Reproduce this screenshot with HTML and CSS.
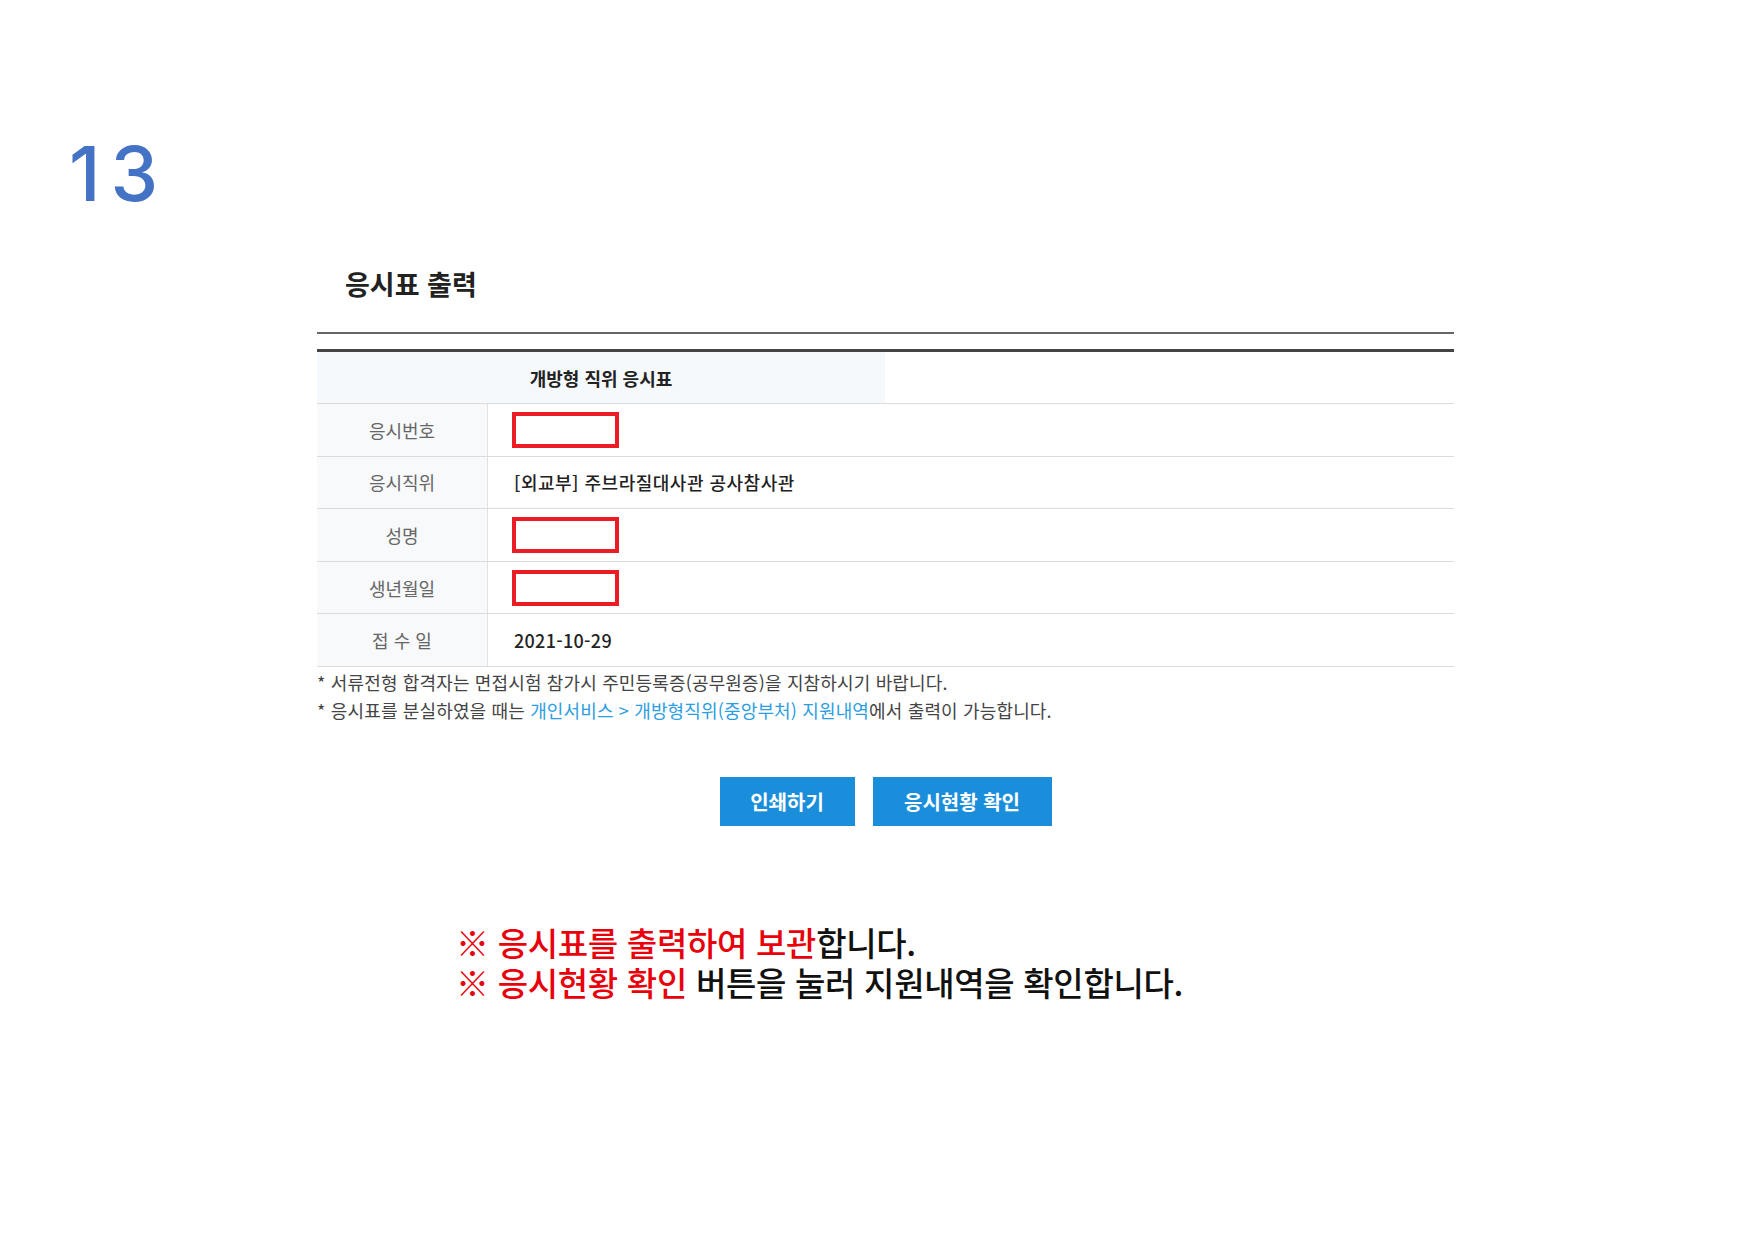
FILE: index.html
```html
<!DOCTYPE html>
<html lang="ko">
<head>
  <meta charset="UTF-8">
  <meta name="viewport" content="width=device-width, initial-scale=1.0">
  <title>응시표 출력</title>
  <link rel="stylesheet" href="styles.css">
</head>
<body>
  <div class="page">
    <div class="step">13</div>

    <section class="sheet">
      <h1 class="sheet-title">응시표 출력</h1>
      <div class="rule"></div>

      <div class="ticket">
        <div class="ticket-head"><span>개방형 직위 응시표</span></div>
        <div class="row">
          <div class="label">응시번호</div>
          <div class="value"><span class="mask"></span></div>
        </div>
        <div class="row">
          <div class="label">응시직위</div>
          <div class="value">[외교부] 주브라질대사관 공사참사관</div>
        </div>
        <div class="row">
          <div class="label">성명</div>
          <div class="value"><span class="mask"></span></div>
        </div>
        <div class="row">
          <div class="label">생년월일</div>
          <div class="value"><span class="mask"></span></div>
        </div>
        <div class="row">
          <div class="label">접 수 일</div>
          <div class="value date">2021-10-29</div>
        </div>
      </div>

      <ul class="notes">
        <li>* 서류전형 합격자는 면접시험 참가시 주민등록증(공무원증)을 지참하시기 바랍니다.</li>
        <li>* 응시표를 분실하였을 때는 <a href="#">개인서비스 &gt; 개방형직위(중앙부처) 지원내역</a>에서 출력이 가능합니다.</li>
      </ul>

      <div class="actions">
        <button type="button" class="btn btn-print">인쇄하기</button>
        <button type="button" class="btn btn-status">응시현황 확인</button>
      </div>
    </section>

    <div class="notice">
      <p><em>※ 응시표를 출력하여 보관</em>합니다.</p>
      <p><em>※ 응시현황 확인</em> 버튼을 눌러 지원내역을 확인합니다.</p>
    </div>
  </div>
</body>
</html>
```

FILE: styles.css
```css
* { box-sizing: border-box; margin: 0; padding: 0; }
body { background: #fff; color: #333; font-family: "Noto Sans CJK KR", "Noto Sans", sans-serif; }
.page { width: 1755px; height: 1241px; padding: 135px 0 0 69px; }

.step { font-family: Inter, "Noto Sans", sans-serif; font-size: 76px; line-height: 1; font-weight: 500; color: #4472c4; letter-spacing: 10px; }

.sheet { width: 1137px; margin: 55px 0 0 248px; }
.sheet-title { font-size: 27px; font-weight: 700; color: #222; line-height: 36px; padding-left: 28px; }
.rule { height: 2px; background: #666; margin-top: 30px; }

.ticket { border-top: 3px solid #444; margin-top: 15px; }
.ticket-head { height: 52px; border-bottom: 1px solid #dcdcdc; }
.ticket-head span { display: flex; align-items: center; justify-content: center; width: 568px; height: 100%; background: #f6f9fc; font-size: 18px; font-weight: 700; color: #222; }

.row { display: grid; grid-template-columns: 171px 1fr; height: 52.6px; border-bottom: 1px solid #dcdcdc; }
.label { display: flex; align-items: center; justify-content: center; background: #f7f9fb; border-right: 1px solid #e2e2e2; font-size: 18px; color: #666; }
.value { display: flex; align-items: center; padding-left: 26px; font-size: 18px; font-weight: 500; color: #222; letter-spacing: 0.5px; }
.date { letter-spacing: 0.3px; }
.mask { display: block; width: 107px; height: 36px; border: 4px solid #ec1c24; margin-left: -2px; }

.notes { list-style: none; margin-top: 1px; font-size: 18px; line-height: 28px; color: #444; letter-spacing: 0.15px; }
.notes a { color: #2b9ee2; text-decoration: none; }

.actions { display: flex; justify-content: center; gap: 18px; margin-top: 53px; }
.btn { border: none; height: 49px; background: #1a8edb; color: #fff; font-family: inherit; font-size: 20px; font-weight: 700; }
.btn-print { width: 135px; }
.btn-status { width: 179px; }

.notice { margin: 96px 0 0 387px; font-size: 33px; line-height: 40px; font-weight: 500; color: #111; letter-spacing: -0.3px; }
.notice em { font-style: normal; color: #e8000b; }
```
